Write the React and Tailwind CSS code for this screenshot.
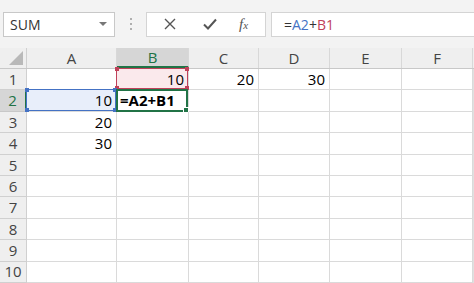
const cols = [
  { key: 'A', w: 'w-[90px]' },
  { key: 'B', w: 'w-[72px]' },
  { key: 'C', w: 'w-[70px]' },
  { key: 'D', w: 'w-[71px]' },
  { key: 'E', w: 'w-[72px]' },
  { key: 'F', w: 'w-[71px]' },
]

const data = {
  B1: '10',
  C1: '20',
  D1: '30',
  A2: '10',
  A3: '20',
  A4: '30',
}

const rows = [1, 2, 3, 4, 5, 6, 7, 8, 9, 10]

const Dot = ({ className }) => <span className={`absolute h-[4px] w-[4px] ${className}`} />

const Highlight = ({ id }) => {
  if (id === 'A2')
    return (
      <div className="pointer-events-none absolute -left-px -top-px bottom-0 right-0 border border-[#4472c4]">
        <Dot className="-left-[2px] -top-[2px] bg-[#4472c4]" />
        <Dot className="-right-[2px] -top-[2px] bg-[#4472c4]" />
        <Dot className="-left-[2px] -bottom-[2px] bg-[#4472c4]" />
        <Dot className="-right-[2px] -bottom-[2px] bg-[#4472c4]" />
      </div>
    )
  if (id === 'B1')
    return (
      <div className="pointer-events-none absolute -left-px -top-px bottom-0 right-0 border border-[#c0415a]">
        <Dot className="-left-[2px] -top-[2px] bg-[#c0415a]" />
        <Dot className="-right-[2px] -top-[2px] bg-[#c0415a]" />
        <Dot className="-left-[2px] -bottom-[2px] bg-[#c0415a]" />
        <Dot className="-right-[2px] -bottom-[2px] bg-[#c0415a]" />
      </div>
    )
  if (id === 'B2')
    return (
      <div className="pointer-events-none absolute -left-px -top-px -bottom-px right-0 border-2 border-[#217346]">
        <Dot className="-right-[3px] -bottom-[3px] border border-white bg-[#217346] h-[6px] w-[6px]" />
      </div>
    )
  return null
}

const Cell = ({ col, row }) => {
  const id = col.key + row
  const bg = id === 'A2' ? 'bg-[#e8eefa]' : id === 'B1' ? 'bg-[#fae9ec]' : 'bg-white'
  return (
    <div className={`relative ${col.w} h-full shrink-0 border-b border-r border-[#dadada] ${bg}`}>
      {id === 'B2' ? (
        <div className="flex h-full items-center pl-[3px] text-[15px] font-bold text-black">=A2+B1</div>
      ) : (
        <div className="flex h-full items-center justify-end pr-[4px] text-[15px] text-black">{data[id]}</div>
      )}
      <Highlight id={id} />
    </div>
  )
}

const App = () => {
  return (
    <div className="h-[283px] w-[474px] overflow-hidden bg-[#f3f3f3] font-['Open_Sans',sans-serif]">
      <div className="flex h-[48px] items-center">
        <div className="ml-[3px] flex h-[25px] w-[112px] items-center justify-between border border-[#c8c8c8] bg-white pl-[6px] pr-[7px]">
          <span className="text-[14px] text-[#333]">SUM</span>
          <span className="h-0 w-0 border-x-[4px] border-t-[4px] border-x-transparent border-t-[#777]" />
        </div>
        <div className="ml-[15px] flex flex-col gap-[3px]">
          <span className="h-[2px] w-[2px] rounded-full bg-[#999]" />
          <span className="h-[2px] w-[2px] rounded-full bg-[#999]" />
          <span className="h-[2px] w-[2px] rounded-full bg-[#999]" />
        </div>
        <div className="ml-[14px] flex h-[25px] w-[120px] items-center border border-[#d4d4d4] bg-white">
          <svg className="ml-[17px]" width="12" height="12" viewBox="0 0 12 12">
            <path d="M1 1 L11 11 M11 1 L1 11" stroke="#555" strokeWidth="1.4" fill="none" />
          </svg>
          <svg className="ml-[27px]" width="14" height="12" viewBox="0 0 14 12">
            <path d="M1 6.5 L5 10.5 L13 1.5" stroke="#555" strokeWidth="2" fill="none" />
          </svg>
          <span className="ml-[22px] font-['Liberation_Serif',serif] text-[15px] italic text-[#555]">
            f<span className="text-[11px]">x</span>
          </span>
        </div>
        <div className="ml-[5px] flex h-[25px] flex-1 items-center border-y border-l border-[#d4d4d4] bg-white pl-[12px] text-[14px]">
          <span className="text-[#333]">=</span>
          <span className="text-[#4472c4]">A2</span>
          <span className="text-[#333]">+</span>
          <span className="text-[#c0415a]">B1</span>
        </div>
      </div>
      <div className="flex h-[21px] border-b border-[#c8c8c8] bg-[#efefef] text-[15px] text-[#444]">
        <div className="relative w-[27px] shrink-0 border-r border-[#d0d0d0]">
          <svg className="absolute bottom-[3px] right-[3px]" width="14" height="14" viewBox="0 0 14 14">
            <path d="M14 0 L14 14 L0 14 Z" fill="#b9b9b9" />
          </svg>
        </div>
        {cols.map((c) => (
          <div
            key={c.key}
            className={`flex ${c.w} shrink-0 items-center justify-center border-r border-[#d8d8d8] ${
              c.key === 'B' ? 'border-b-2 border-b-[#217346] bg-[#d6d6d6] text-[#217346]' : ''
            }`}
          >
            {c.key}
          </div>
        ))}
        <div className="flex-1" />
      </div>
      <div className="flex">
        <div className="flex flex-1 flex-col">
          {rows.map((r) => (
            <div key={r} className="flex h-[21.4px]">
              <div
                className={`flex w-[27px] shrink-0 items-center justify-center border-b border-r text-[15px] ${
                  r === 2
                    ? 'border-r-2 border-b-[#c8c8c8] border-r-[#217346] bg-[#d6d6d6] text-[#217346]'
                    : 'border-[#d0d0d0] bg-[#efefef] text-[#444]'
                }`}
              >
                {r}
              </div>
              {cols.map((c) => (
                <Cell key={c.key} col={c} row={r} />
              ))}
              <div className="flex-1 bg-[#e0e0e0]" />
            </div>
          ))}
        </div>
      </div>
    </div>
  )
}

export default App
